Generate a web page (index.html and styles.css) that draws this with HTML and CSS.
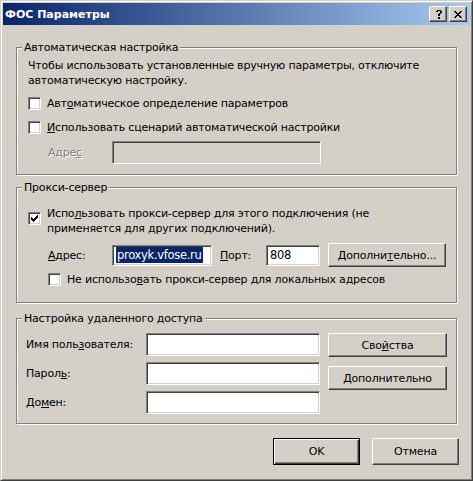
FILE: index.html
```html
<!DOCTYPE html>
<html lang="ru">
<head>
<meta charset="utf-8">
<title>ФОС Параметры</title>
<link rel="stylesheet" href="styles.css">
</head>
<body>
<div class="window">
  <div class="titlebar">
    <span class="title">ФОС Параметры</span>
    <span class="tb-btn tb-help">
      <svg width="6" height="9" viewBox="0 0 6 9" shape-rendering="crispEdges"><path d="M1 0h4v1H1zM0 1h2v1H0zM4 1h2v2H4zM3 3h2v1H3zM2 4h2v2H2zM2 7h2v2H2z" fill="#000"/></svg>
    </span>
    <span class="tb-btn tb-close">
      <svg width="8" height="7" viewBox="0 0 8 7" shape-rendering="crispEdges"><path d="M0 0h2v1H0zM6 0h2v1H6zM1 1h2v1H1zM5 1h2v1H5zM2 2h4v1H2zM3 3h2v1H3zM2 4h4v1H2zM1 5h2v1H1zM5 5h2v1H5zM0 6h2v1H0zM6 6h2v1H6z" fill="#000"/></svg>
    </span>
  </div>

  <div class="content">
    <section class="group group-auto">
      <div class="group-title">Автоматическая настройка</div>
      <p class="note">Чтобы использовать установленные вручную параметры, отключите<br>автоматическую настройку.</p>
      <div class="check row-auto1"><span class="box"></span><span class="check-label">Авт<u>о</u>матическое определение параметров</span></div>
      <div class="check row-auto2"><span class="box"></span><span class="check-label"><u>И</u>спользовать сценарий автоматической настройки</span></div>
      <div class="field-row row-script">
        <span class="label disabled label-script">Адре<u>с</u></span>
        <span class="input input-disabled input-script"></span>
      </div>
    </section>

    <section class="group group-proxy">
      <div class="group-title">Прокси-сервер</div>
      <div class="check check-multi row-proxy">
        <span class="box checked">
          <svg width="7" height="7" viewBox="0 0 7 7" shape-rendering="crispEdges"><path d="M0 2h1v3H0zM1 3h1v3H1zM2 4h1v3H2zM3 3h1v3H3zM4 2h1v3H4zM5 1h1v3H5zM6 0h1v3H6z" fill="#000"/></svg>
        </span>
        <span class="check-label">Испо<u>л</u>ьзовать прокси-сервер для этого подключения (не<br>применяется для других подключений).</span>
      </div>
      <div class="field-row row-address">
        <span class="label label-address"><u>А</u>дрес:</span>
        <span class="input input-address"><span class="selected">proxyk.vfose.ru</span></span>
        <span class="label label-port"><u>П</u>орт:</span>
        <span class="input input-port">808</span>
        <span class="button button-advanced">Дополни<u>т</u>ельно...</span>
      </div>
      <div class="check row-local"><span class="box"></span><span class="check-label">Не использо<u>в</u>ать прокси-сервер для локальных адресов</span></div>
    </section>

    <section class="group group-remote">
      <div class="group-title">Настройка удаленного доступа</div>
      <div class="remote">
        <div class="remote-fields">
          <div class="remote-row"><span class="label remote-label">Имя поль<u>з</u>ователя:</span><span class="input remote-input"></span></div>
          <div class="remote-row"><span class="label remote-label">Парол<u>ь</u>:</span><span class="input remote-input"></span></div>
          <div class="remote-row"><span class="label remote-label">До<u>м</u>ен:</span><span class="input remote-input"></span></div>
        </div>
        <div class="remote-buttons">
          <span class="button button-props">Сво<u>й</u>ства</span>
          <span class="button button-more"><u>Д</u>ополнительно</span>
        </div>
      </div>
    </section>

    <div class="footer">
      <span class="button button-default">OK</span>
      <span class="button button-cancel">Отмена</span>
    </div>
  </div>
</div>
</body>
</html>
```

FILE: styles.css
```css
* {
  box-sizing: border-box;
}

html, body {
  margin: 0;
  padding: 0;
  background: #d4d0c8;
}

body {
  font-family: "DejaVu Sans", "Liberation Sans", sans-serif;
  font-size: 11px;
  line-height: 15px;
  letter-spacing: -0.2px;
  color: #000;
}

u {
  text-decoration: underline;
  text-underline-offset: 1px;
}

.window {
  width: 473px;
  height: 481px;
  background: #d4d0c8;
  border: 1px solid;
  border-color: #d4d0c8 #404040 #404040 #d4d0c8;
  box-shadow: inset 1px 1px 0 #fff, inset -1px -1px 0 #808080;
  padding: 2px;
  display: flex;
  flex-direction: column;
}

/* Title bar */
.titlebar {
  height: 22px;
  flex: none;
  background: linear-gradient(to right, #0a246a, #a6caf0);
  display: flex;
  align-items: center;
  padding: 0 3px 0 2px;
}

.title {
  flex: 1;
  color: #fff;
  font-weight: bold;
  font-size: 11px;
  letter-spacing: 0;
}

.tb-btn {
  width: 18px;
  height: 16px;
  background: #d4d0c8;
  border: 1px solid;
  border-color: #fff #404040 #404040 #fff;
  box-shadow: inset -1px -1px 0 #808080;
  display: flex;
  align-items: center;
  justify-content: center;
}

.tb-help {
  margin-right: 2px;
}

.tb-help svg {
  margin-left: 1px;
}

/* Content */
.content {
  padding: 22px 13px 0 13px;
  display: flex;
  flex-direction: column;
}

.group {
  border: 1px solid #808080;
  box-shadow: 1px 1px 0 #fff, inset 1px 1px 0 #fff;
  display: flex;
  flex-direction: column;
  padding: 0 10px 0 11px;
}

.group-title {
  align-self: flex-start;
  margin: -8px 0 0 -6px;
  padding: 0 2px;
  background: #d4d0c8;
  line-height: 15px;
}

.note {
  margin: 3px 0 0 0;
}

.check {
  display: flex;
  align-items: center;
  gap: 6px;
}

.check-multi {
  align-items: flex-start;
}

.check-multi .box {
  margin-top: 6px;
}

.box {
  width: 13px;
  height: 13px;
  flex: none;
  background: #fff;
  border: 1px solid;
  border-color: #808080 #fff #fff #808080;
  box-shadow: inset 1px 1px 0 #404040, inset -1px -1px 0 #d4d0c8;
  display: flex;
  align-items: center;
  justify-content: center;
}

.row-auto1 {
  margin-top: 8px;
}

.row-auto2 {
  margin-top: 9px;
}

.field-row {
  display: flex;
  align-items: center;
}

.row-script {
  margin-top: 6px;
  padding-left: 20px;
  margin-bottom: 10px;
}

.label-script {
  width: 64px;
}

.disabled {
  color: #808080;
  text-shadow: 1px 1px 0 #fff;
}

.input {
  height: 23px;
  background: #fff;
  border: 1px solid;
  border-color: #808080 #fff #fff #808080;
  box-shadow: inset 1px 1px 0 #404040, inset -1px -1px 0 #d4d0c8;
  display: flex;
  align-items: center;
  padding-left: 3px;
  font-size: 11.5px;
  letter-spacing: -0.3px;
}

.input-disabled {
  background: #d4d0c8;
}

.input-script {
  width: 209px;
}

.group-proxy {
  margin-top: 12px;
}

.row-proxy {
  margin-top: 11px;
}

.row-address {
  margin-top: 7px;
  padding-left: 20px;
}

.label-address {
  width: 64px;
}

.input-address {
  width: 100px;
  height: 21px;
}

.selected {
  background: #0a246a;
  color: #fff;
  padding: 0 1px;
  line-height: 16px;
}

.label-port {
  margin-left: 8px;
  width: 46px;
}

.input-port {
  width: 54px;
  height: 21px;
}

.button {
  display: flex;
  align-items: center;
  justify-content: center;
  background: #d4d0c8;
  border: 1px solid;
  border-color: #fff #404040 #404040 #fff;
  box-shadow: inset -1px -1px 0 #808080;
  height: 24px;
}

.button-advanced {
  margin-left: 8px;
  width: 118px;
}

.row-local {
  margin-top: 5px;
  padding-left: 20px;
  margin-bottom: 15px;
}

.group-remote {
  margin-top: 15px;
}

.remote {
  display: flex;
  margin-top: 7px;
  margin-bottom: 9px;
}

.remote-fields {
  display: flex;
  flex-direction: column;
  gap: 6px;
  margin-left: -2px;
}

.remote-row {
  display: flex;
  align-items: center;
}

.remote-label {
  width: 120px;
}

.remote-input {
  width: 174px;
}

.remote-buttons {
  display: flex;
  flex-direction: column;
  gap: 9px;
  margin-left: 8px;
}

.remote-buttons .button {
  width: 119px;
}

.footer {
  display: flex;
  justify-content: flex-end;
  gap: 12px;
  margin-top: 14px;
  margin-right: -2px;
}

.footer .button {
  width: 87px;
  height: 27px;
}

.button-default {
  border: 1px solid #000;
  box-shadow: inset 1px 1px 0 #fff, inset -1px -1px 0 #404040, inset -2px -2px 0 #808080;
}
```
